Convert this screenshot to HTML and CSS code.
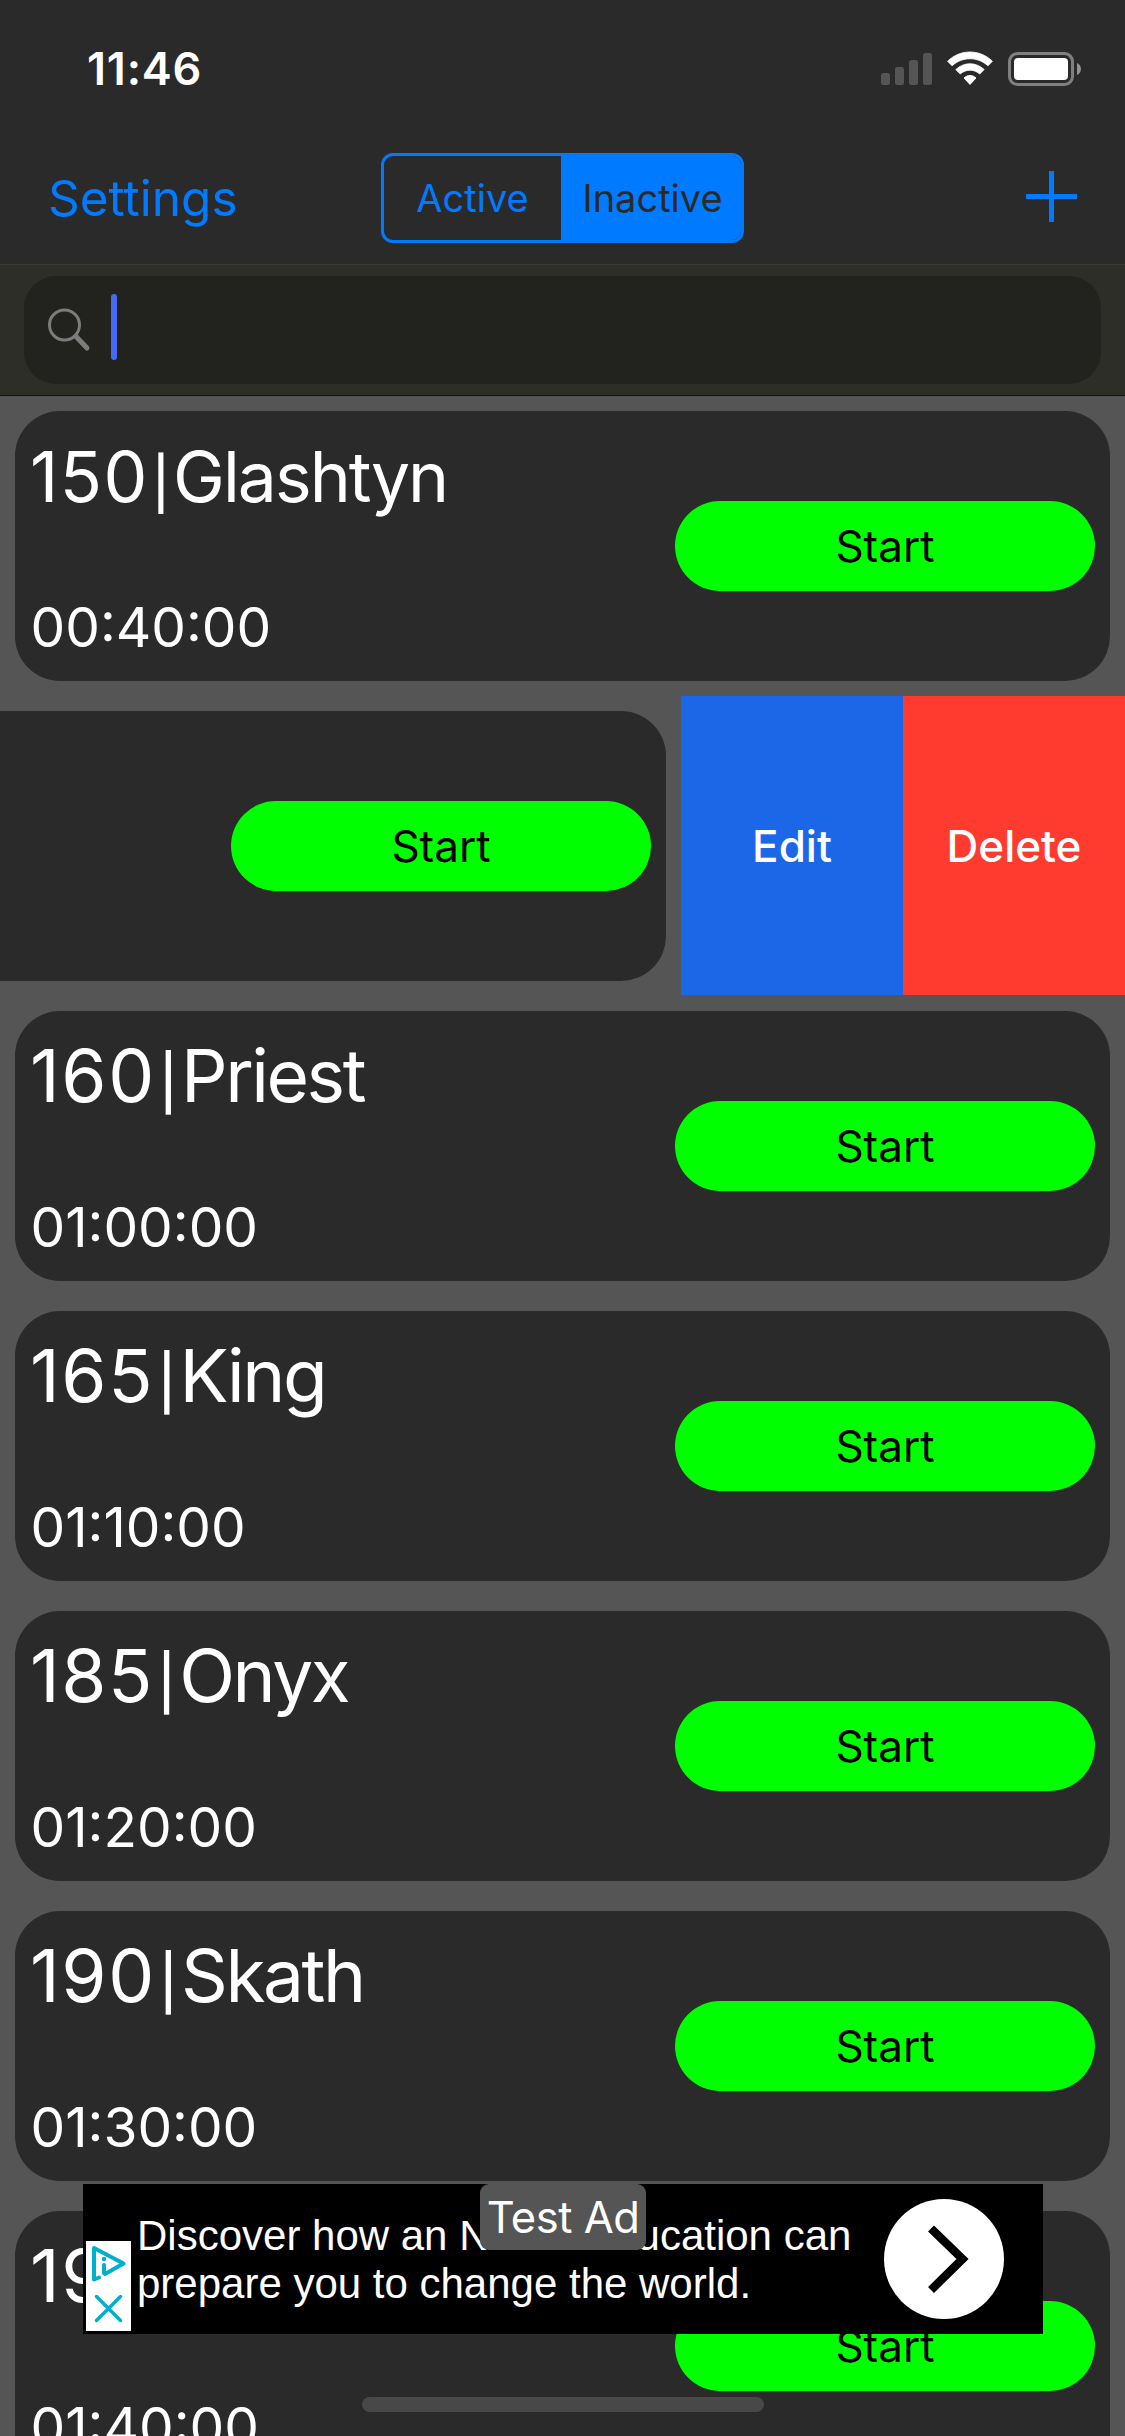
FILE: index.html
```
<!DOCTYPE html>
<html lang="en">
<head>
    <meta charset="UTF-8">
    <meta name="viewport" content="width=device-width, initial-scale=1.0">
    <title>Timers</title>
    <link rel="stylesheet" href="styles.css">
</head>
<body>

    <header>
        <div class="status-bar">
            <span class="clock">11:46</span>
            <svg class="status-icons" width="202" height="36" viewBox="0 0 202 36">
                <g fill="#555555">
                    <rect x="1" y="22" width="9" height="12" rx="2.5"/>
                    <rect x="15" y="16" width="9" height="18" rx="2.5"/>
                    <rect x="29" y="9" width="9" height="25" rx="2.5"/>
                    <rect x="43" y="2" width="9" height="32" rx="2.5"/>
                </g>
                <g fill="#ffffff">
                    <path d="M67.6 10.2 C80.5 -2.1 99.5 -2.1 112.4 10.2 L108 14.8 C97.5 5.4 82.5 5.4 72 14.8 Z" stroke="#ffffff" stroke-width="0.8" stroke-linejoin="round"/>
                    <path d="M75.8 18.6 C84 10.8 96 10.8 104.2 18.6 L99.8 23 C94 17.9 86 17.9 80.2 23 Z" stroke="#ffffff" stroke-width="0.8" stroke-linejoin="round"/>
                    <path d="M84 27 C87.5 23.7 92.5 23.7 96 27 L90 33.4 Z" stroke="#ffffff" stroke-width="1" stroke-linejoin="round"/>
                </g>
                <rect x="129.5" y="2.5" width="63" height="31" rx="8" fill="none" stroke="#808080" stroke-width="3"/>
                <rect x="134" y="7" width="54" height="22" rx="4" fill="#ffffff"/>
                <path d="M197 12 C202.3 14 202.3 22 197 24 Z" fill="#939393"/>
            </svg>
        </div>
        <nav>
            <a class="settings" href="#settings">Settings</a>
            <div class="segments">
                <a class="segment" href="#active">Active</a>
                <a class="segment selected" href="#inactive">Inactive</a>
            </div>
            <a class="add" href="#add">
                <svg width="51" height="51" viewBox="0 0 51 51"><path d="M25.5 0 V51 M0 25.5 H51" stroke="#007aff" stroke-width="5"/></svg>
            </a>
        </nav>
    </header>

    <div class="search-bar">
        <div class="search-field">
            <svg width="44" height="44" viewBox="0 0 44 44" fill="none" stroke="#7c7c7c">
                <circle cx="17.5" cy="17" r="15" stroke-width="3"/>
                <path d="M29 28.5 L40 40" stroke-width="5" stroke-linecap="round"/>
            </svg>
            <span class="caret"></span>
        </div>
    </div>

    <main>
        <div class="row">
            <div class="card">
                <div class="info">
                    <h2 class="title small">150<span class="bar">|</span><span class="name">Glashtyn</span></h2>
                    <p class="time">00:40:00</p>
                </div>
                <button class="start">Start</button>
            </div>
        </div>
        <!-- Row swiped open to show its actions -->
        <div class="row swiped">
            <div class="card">
                <button class="start">Start</button>
            </div>
            <div class="actions">
                <button class="edit">Edit</button>
                <button class="delete">Delete</button>
            </div>
        </div>
        <div class="row">
            <div class="card">
                <div class="info">
                    <h2 class="title">160<span class="bar">|</span><span class="name">Priest</span></h2>
                    <p class="time">01:00:00</p>
                </div>
                <button class="start">Start</button>
            </div>
        </div>
        <div class="row">
            <div class="card">
                <div class="info">
                    <h2 class="title">165<span class="bar">|</span><span class="name">King</span></h2>
                    <p class="time">01:10:00</p>
                </div>
                <button class="start">Start</button>
            </div>
        </div>
        <div class="row">
            <div class="card">
                <div class="info">
                    <h2 class="title">185<span class="bar">|</span><span class="name">Onyx</span></h2>
                    <p class="time">01:20:00</p>
                </div>
                <button class="start">Start</button>
            </div>
        </div>
        <div class="row">
            <div class="card">
                <div class="info">
                    <h2 class="title">190<span class="bar">|</span><span class="name">Skath</span></h2>
                    <p class="time">01:30:00</p>
                </div>
                <button class="start">Start</button>
            </div>
        </div>
        <div class="row">
            <div class="card">
                <div class="info">
                    <h2 class="title">195<span class="bar">|</span></h2>
                    <p class="time">01:40:00</p>
                </div>
                <button class="start">Start</button>
            </div>
        </div>
    </main>

    <aside class="ad">
        <div class="ad-choices">
            <svg width="45" height="90" viewBox="0 0 45 90" fill="none" stroke="#00aecd" stroke-linecap="round" stroke-linejoin="round">
                <path d="M13 36.5 L8 38.5 V7 L37.5 22.5 L19 33" stroke-width="4"/>
                <path d="M18 24 V32" stroke-width="4"/>
                <circle cx="18" cy="18" r="2.2" fill="#00aecd" stroke="none"/>
                <path d="M10.5 55.5 L34.5 79.5 M34.5 55.5 L10.5 79.5" stroke-width="3.5"/>
            </svg>
        </div>
        <p class="ad-text">Discover how an NCSU education can<br>prepare you to change the world.</p>
        <svg class="ad-arrow" width="120" height="120" viewBox="0 0 120 120">
            <circle cx="60" cy="60" r="60" fill="#ffffff"/>
            <path d="M47 29.5 L78.5 60 L47 91" fill="none" stroke="#000000" stroke-width="8.5"/>
        </svg>
        <span class="test-label">Test Ad</span>
    </aside>

    <div class="home-indicator"></div>

</body>
</html>
```
FILE: styles.css
```
* {
    box-sizing: border-box;
}

body {
    font-family: Inter, sans-serif;
    margin: 0;
    padding: 0;
    width: 1125px;
    height: 2436px;
    overflow: hidden;
    position: relative;
    background-color: #555555;
    color: white;
}

a {
    color: #007aff;
    text-decoration: none;
}

button {
    border: none;
    padding: 0;
    font-family: inherit;
    font-size: 44px;
}

svg {
    display: block;
}

/* Status bar and navigation */
header {
    height: 265px;
    background-color: #2a2a2a;
    border-bottom: 1px solid #393935;
}

.status-bar {
    height: 132px;
    padding: 0 43px 0 87px;
    display: flex;
    justify-content: space-between;
    align-items: flex-start;
}

.clock {
    margin-top: 42px;
    font-size: 45px;
    line-height: 54px;
    font-weight: 600;
    letter-spacing: 0.8px;
}

.status-icons {
    margin-top: 51px;
}

nav {
    height: 132px;
    padding: 0 48px 0 48px;
    display: grid;
    grid-template-columns: 333px 363px 1fr;
    align-items: center;
}

.settings {
    font-size: 49.5px;
}

.segments {
    height: 90px;
    display: flex;
    border: 3px solid #007aff;
    border-radius: 12px;
    overflow: hidden;
}

.segment {
    width: 177px;
    display: flex;
    align-items: center;
    justify-content: center;
    font-size: 38px;
}

.segment.selected {
    width: 180px;
    padding-left: 3px;
    background-color: #007aff;
    color: #2a2a2a;
}

.add {
    justify-self: end;
    margin-bottom: 3px;
}

/* Search */
.search-bar {
    height: 131px;
    padding: 11px 24px;
    background-color: #2e2e29;
    border-bottom: 1px solid #111111;
}

.search-field {
    height: 108px;
    padding-left: 23px;
    display: flex;
    align-items: center;
    background-color: #22221e;
    border-radius: 32px;
}

.caret {
    width: 6px;
    height: 66px;
    margin: 0 0 6px 20px;
    border-radius: 3px;
    background-color: #466bf2;
}

/* Timer list */
.row {
    height: 300px;
    padding: 15px;
    display: flex;
}

.card {
    flex: 1;
    height: 270px;
    padding: 0 15px;
    display: flex;
    align-items: center;
    justify-content: space-between;
    background-color: #2a2a2a;
    border-radius: 45px;
}

.info {
    height: 270px;
    padding-top: 20px;
    display: flex;
    flex-direction: column;
}

.title {
    margin: 0;
    height: 151px;
    font-size: 73px;
    line-height: 90px;
    font-weight: 400;
    letter-spacing: 0.022em;
    white-space: nowrap;
}

.title.small {
    font-size: 69.5px;
    line-height: 92px;
}

.bar {
    display: inline-block;
    width: 0.43em;
    margin: 0 -1px 0 1px;
    font-size: 0.74em;
    font-weight: 500;
    line-height: 1;
    letter-spacing: 0;
    text-align: center;
}

.name {
    margin-left: 2px;
    letter-spacing: -0.034em;
}

.small .name {
    letter-spacing: -0.028em;
}

.time {
    margin: 0 0 0 0.5px;
    font-size: 55px;
    line-height: 90px;
}

.start {
    width: 420px;
    height: 90px;
    border-radius: 45px;
    background-color: #00ff00;
    color: black;
}

.row.swiped {
    padding: 0;
}

.swiped .card {
    margin: 15px 15px 15px 0;
    justify-content: flex-end;
    border-radius: 0 45px 45px 0;
}

.actions {
    height: 299px;
    display: flex;
}

.actions button {
    width: 222px;
    color: white;
    font-weight: 500;
}

.edit {
    background-color: #1c67e7;
}

.delete {
    background-color: #ff3b30;
}

/* Ad banner over the list */
.ad {
    position: absolute;
    left: 83px;
    top: 2184px;
    width: 960px;
    height: 150px;
    padding: 0 39px 0 3px;
    display: flex;
    align-items: center;
    background-color: black;
}

.ad-choices {
    align-self: flex-end;
    margin-bottom: 3px;
    background-color: white;
}

.ad-text {
    margin: 2px 0 0 6px;
    flex: 1;
    white-space: nowrap;
    font-family: "Liberation Sans", Arial, sans-serif;
    font-size: 42px;
    line-height: 48px;
}

.test-label {
    position: absolute;
    left: 397px;
    top: 0;
    width: 166px;
    height: 66px;
    border-radius: 9px;
    background-color: #555555;
    font-size: 43.5px;
    line-height: 66px;
    letter-spacing: -0.5px;
    text-align: center;
}

.home-indicator {
    position: absolute;
    left: 362px;
    top: 2397px;
    width: 402px;
    height: 15px;
    border-radius: 8px;
    background-color: #484848;
}
```
